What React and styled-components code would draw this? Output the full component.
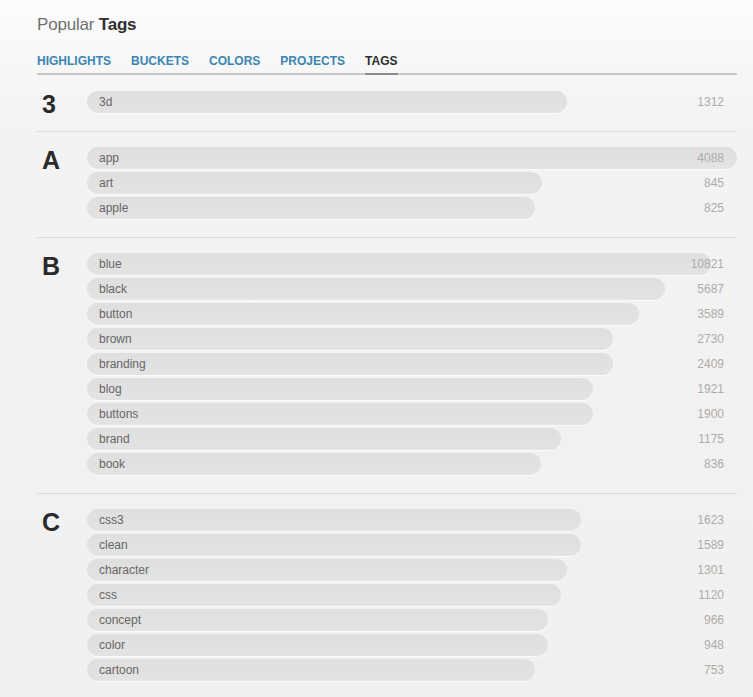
import React from 'react';
import styled, { createGlobalStyle } from 'styled-components';

const tabs = ['Highlights', 'Buckets', 'Colors', 'Projects', 'Tags'];

const groups = [
    { letter: '3', tags: [['3d', 1312, 480]] },
    { letter: 'A', tags: [['app', 4088, 650], ['art', 845, 455], ['apple', 825, 448]] },
    {
        letter: 'B',
        tags: [
            ['blue', 10821, 624],
            ['black', 5687, 578],
            ['button', 3589, 552],
            ['brown', 2730, 526],
            ['branding', 2409, 526],
            ['blog', 1921, 506],
            ['buttons', 1900, 506],
            ['brand', 1175, 474],
            ['book', 836, 454],
        ],
    },
    {
        letter: 'C',
        tags: [
            ['css3', 1623, 494],
            ['clean', 1589, 494],
            ['character', 1301, 480],
            ['css', 1120, 474],
            ['concept', 966, 461],
            ['color', 948, 461],
            ['cartoon', 753, 448],
        ],
    },
];

export default function App() {
    return (
        <Page>
            <GlobalStyle/>
            <Title>Popular <strong>Tags</strong></Title>
            <Tabs>
                {tabs.map(t => (
                    <Tab key={t} active={t === 'Tags'}>{t}</Tab>
                ))}
            </Tabs>
            {groups.map(g => (
                <Group key={g.letter}>
                    <Letter>{g.letter}</Letter>
                    <List>
                        {g.tags.map(([name, count, width]) => (
                            <Row key={name}>
                                <Bar style={{ width }}>{name}</Bar>
                                <Count>{count}</Count>
                            </Row>
                        ))}
                    </List>
                </Group>
            ))}
        </Page>
    );
}

const GlobalStyle = createGlobalStyle`
    html, body {
        margin: 0;
        padding: 0;
    }
    body {
        background: linear-gradient(#fcfcfc 0, #f3f3f3 120px, #f0f0f0 100%);
        min-height: 100vh;
        font-family: "Liberation Sans", Arial, sans-serif;
    }
`;

const Page = styled.div`
    width: 700px;
    padding: 15px 16px 20px 37px;
`;

const Title = styled.h1`
    margin: 0;
    font-size: 17px;
    line-height: 20px;
    font-weight: normal;
    color: #707070;
    letter-spacing: -0.2px;

    strong {
        color: #2f2f2f;
        font-weight: bold;
    }
`;

const Tabs = styled.nav`
    display: flex;
    gap: 20px;
    margin-top: 19px;
    border-bottom: 2px solid #c8c8c8;
`;

const Tab = styled.a`
    display: block;
    font-size: 12px;
    line-height: 14px;
    font-weight: bold;
    text-transform: uppercase;
    color: ${p => (p.active ? '#2e2e2e' : '#3a85b3')};
    padding-bottom: 5px;
    margin-bottom: -2px;
    border-bottom: 2px solid ${p => (p.active ? '#8c8c8c' : 'transparent')};
    cursor: pointer;
`;

const Group = styled.section`
    display: flex;
    align-items: flex-start;
    padding: 15px 0 18px;
    border-bottom: 1px solid #dadada;

    &:first-of-type {
        padding-top: 16px;
    }
`;

const Letter = styled.div`
    width: 45px;
    height: 22px;
    padding-left: 5px;
    flex-shrink: 0;
    font-size: 25px;
    line-height: 26px;
    font-weight: bold;
    color: #2a2a2a;
`;

const List = styled.div`
    flex: 1;
    display: grid;
    grid-auto-rows: 22px;
    row-gap: 3px;
`;

const Row = styled.div`
    display: grid;
    grid-template-areas: 'cell';
    align-items: center;
`;

const Bar = styled.div`
    grid-area: cell;
    box-sizing: border-box;
    height: 22px;
    padding-left: 12px;
    border-radius: 11px;
    background: linear-gradient(#dfdfdf, #e3e3e3);
    box-shadow: 0 1px 0 rgba(255, 255, 255, 0.7);
    font-size: 12px;
    line-height: 22px;
    color: #666;
`;

const Count = styled.span`
    grid-area: cell;
    justify-self: end;
    padding-right: 13px;
    font-size: 12px;
    line-height: 22px;
    color: #acacac;
`;
